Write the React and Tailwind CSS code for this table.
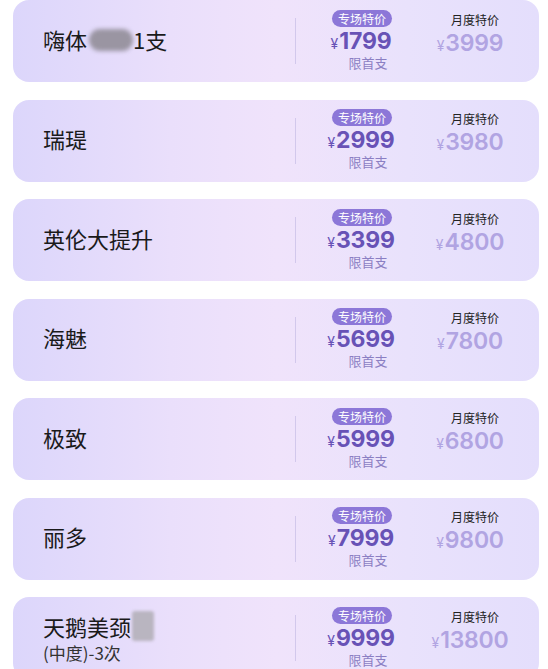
import React from "react";

const items = [
  { title: "嗨体", blur1: true, sale: "1799", month: "3999" },
  { title: "瑞瑅", sale: "2999", month: "3980" },
  { title: "英伦大提升", sale: "3399", month: "4800" },
  { title: "海魅", sale: "5699", month: "7800" },
  { title: "极致", sale: "5999", month: "6800" },
  { title: "丽多", sale: "7999", month: "9800" },
  { title: "天鹅美颈", blur2: true, sub: "(中度)-3次", sale: "9999", month: "13800" },
];

const cjk = { fontFamily: '"Noto Sans CJK SC", "Noto Sans", sans-serif' };
const num = { fontFamily: 'Inter, Roboto, "Noto Sans CJK SC", sans-serif' };

function Title({ it }) {
  if (it.blur1) {
    return (
      <div className="flex items-center text-[22px] text-[#1a1a1a]" style={cjk}>
        <span>嗨体</span>
        <span className="relative inline-block w-[46px] h-[26px]">
          <span className="absolute left-[2px] top-[3px] w-[44px] h-[22px] rounded-[11px] bg-[#9a95a2] blur-[2px]" />
        </span>
        <span>1支</span>
      </div>
    );
  }
  if (it.blur2) {
    return (
      <div className="flex flex-col" style={cjk}>
        <div className="flex items-center text-[22px] leading-[28px] text-[#1a1a1a]">
          <span>天鹅美颈</span>
          <span className="inline-block w-[22px] h-[30px] ml-[1px] bg-[#b9b5c0] blur-[1.5px] rounded-[3px]" />
        </div>
        <div className="text-[17px] leading-[24px] text-[#333]">{it.sub}</div>
      </div>
    );
  }
  return (
    <div className="text-[22px] text-[#1a1a1a]" style={cjk}>
      {it.title}
    </div>
  );
}

function Card({ it }) {
  return (
    <div className="h-[82px] shrink-0 rounded-[16px] flex items-center bg-[linear-gradient(to_right,#dcd6fb_0%,#eadffb_30%,#f0e3fb_50%,#e9e2fc_75%,#e4defc_100%)]">
      <div className={`flex-1 pl-[30px] ${it.blur2 ? "" : "-mt-[4px]"}`}>
        <Title it={it} />
      </div>
      <div className="w-px h-[46px] bg-[#d2c8ec]" />
      <div className="w-[138px] flex flex-col items-center -mt-[2px]">
        <div
          className="h-[17px] px-[6px] rounded-full bg-[#8c77d8] text-white text-[12px] leading-[17px] -ml-[6px]"
          style={cjk}
        >
          专场特价
        </div>
        <div className="flex items-baseline -ml-[8px] mt-[2px] h-[25px] text-[#6852b6]" style={num}>
          <span className="text-[14px] mr-[1px]">¥</span>
          <span className="text-[23px] font-bold leading-[25px] tracking-[-0.2px]">{it.sale}</span>
        </div>
        <div className="text-[13px] leading-[17px] text-[#8b7fc3] ml-[6px]" style={cjk}>
          限首支
        </div>
      </div>
      <div className="w-[82px] flex flex-col items-center -mt-[15px]">
        <div className="text-[12px] leading-[17px] text-[#222]" style={cjk}>
          月度特价
        </div>
        <div className="flex items-baseline mt-[2px] h-[27px] -ml-[10px] text-[#b1a4e2]" style={num}>
          <span className="text-[14px] mr-[1px]">¥</span>
          <span className="text-[23px] font-semibold leading-[27px] tracking-[-0.2px]">{it.month}</span>
        </div>
      </div>
      <div className="w-[23px]" />
    </div>
  );
}

export default function App() {
  return (
    <div className="w-[548px] h-[669px] overflow-hidden bg-white">
      <div className="flex flex-col gap-[17.5px] pl-[13px] pr-[9px]">
        {items.map((it, i) => (
          <Card key={i} it={it} />
        ))}
      </div>
    </div>
  );
}
